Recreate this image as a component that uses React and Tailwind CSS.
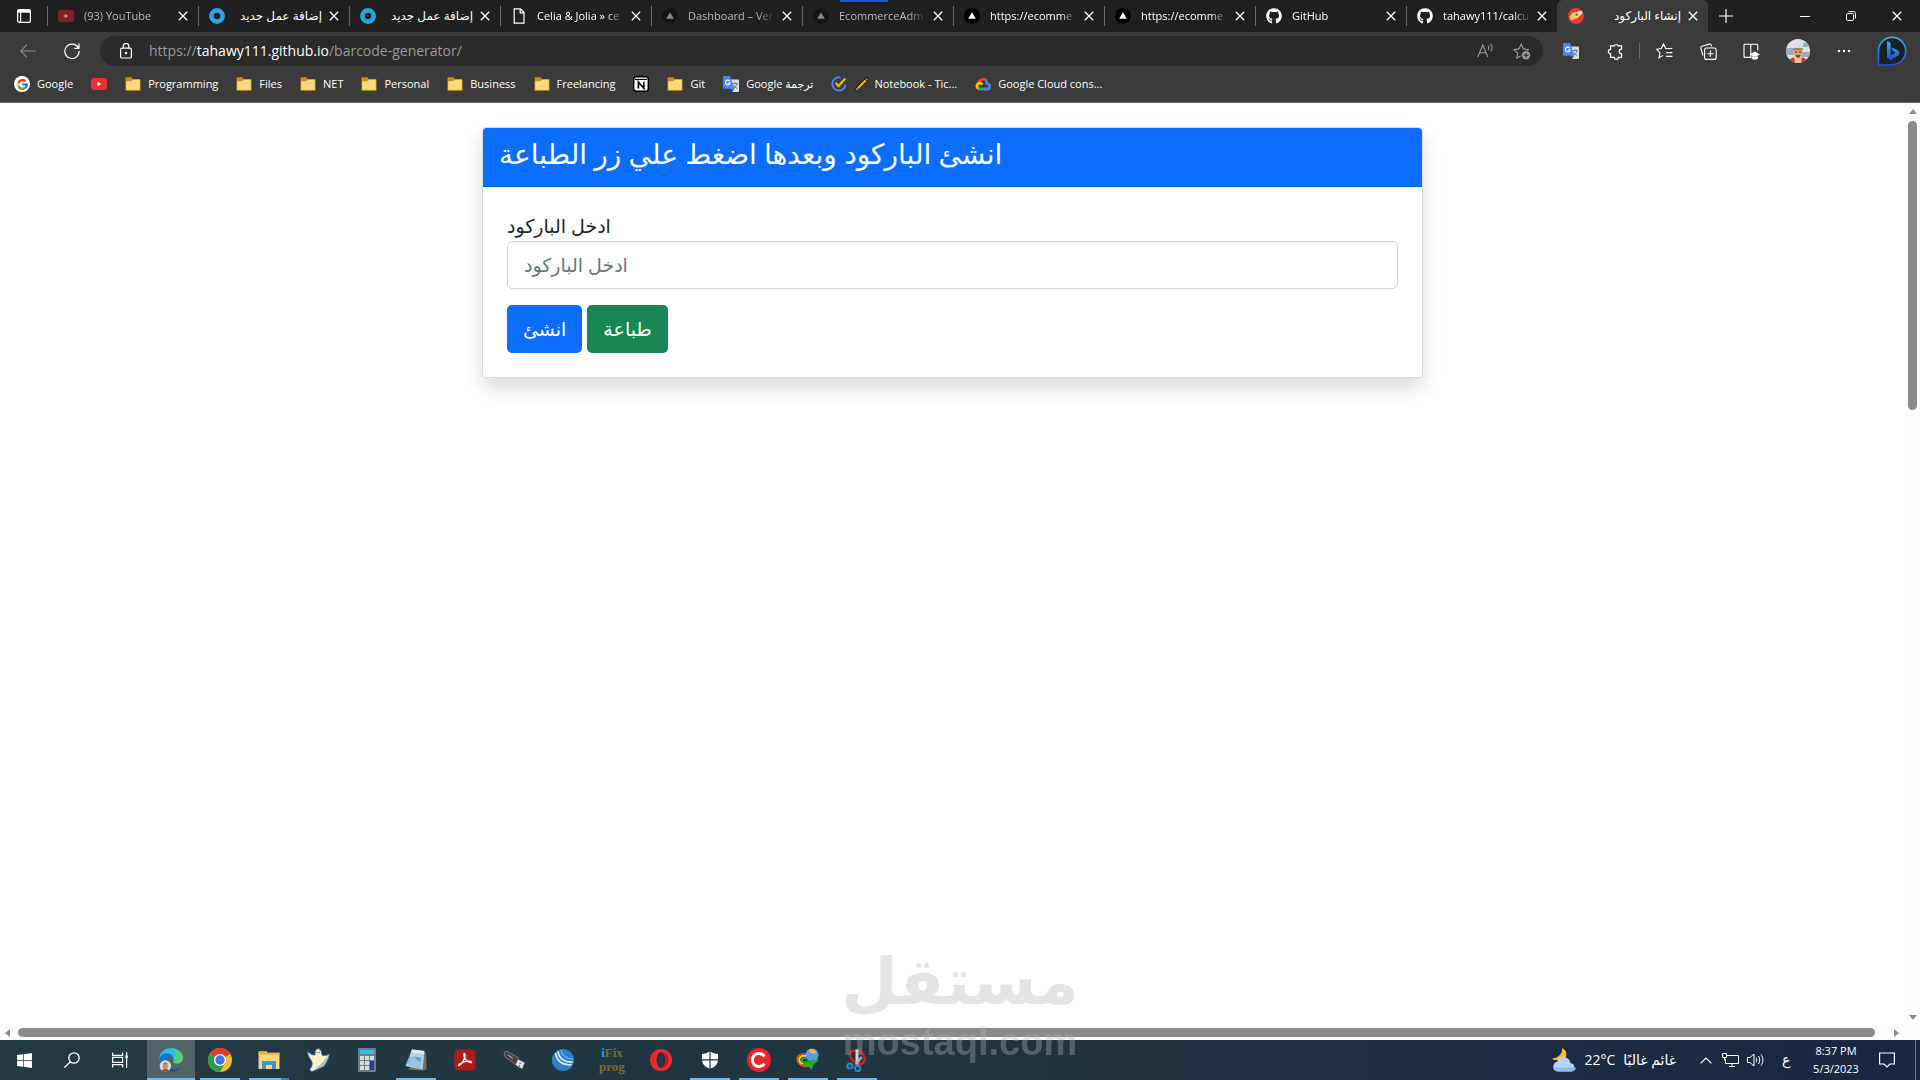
import { useState } from 'react'
import { FaGithub, FaWindows } from 'react-icons/fa'
import { FcGoogle } from 'react-icons/fc'

/* ---------- small shared icons ---------- */

function Close({ size = 10 }) {
  return (
    <svg width={size} height={size} viewBox="0 0 10 10" stroke="currentColor" strokeWidth="1.3">
      <path d="M.8.8l8.4 8.4M9.2.8L.8 9.2" />
    </svg>
  )
}

function Youtube({ dim }) {
  return (
    <svg width="16" height="16" viewBox="0 0 16 16">
      <rect y="2" width="16" height="12" rx="3" fill={dim ? '#842024' : '#f03030'} />
      <path d="M6.5 5.7v4.6L10.3 8z" fill={dim ? '#a99' : '#fff'} />
    </svg>
  )
}

function Ring() {
  return (
    <svg width="16" height="16" viewBox="0 0 16 16">
      <circle cx="8" cy="8" r="5.6" fill="none" stroke="#2ea3e6" strokeWidth="4.6" />
    </svg>
  )
}

function Page() {
  return (
    <svg width="16" height="16" viewBox="0 0 16 16" fill="none" stroke="#fff" strokeWidth="1.2">
      <path d="M3.2.8h6.2L13 4.6v10.6H3.2zM9.2.8v4H13" />
    </svg>
  )
}

function Vercel({ dim }) {
  return (
    <svg width="16" height="16" viewBox="0 0 16 16">
      <circle cx="8" cy="8" r="8" fill={dim ? '#151515' : '#000'} />
      <path d="M8 4.2l3.8 6.6H4.2z" fill={dim ? '#888' : '#fff'} />
    </svg>
  )
}

function Rocket() {
  return (
    <svg width="16" height="16" viewBox="0 0 16 16">
      <circle cx="8" cy="8" r="8" fill="#e8392c" />
      <path d="M1.5 8.5l3-4 4-.5-1 5-3 3.5-2-.5z" fill="#f5bd4f" />
      <path d="M5.5 6L10 3l4 1-1 3-3.5 3-4 1.5z" fill="#f7d56a" />
      <path d="M9.5 3.8l4-1 1 2.6-3 1.6z" fill="#eef1f4" />
      <circle cx="8.6" cy="6.8" r="1.2" fill="#56697a" />
    </svg>
  )
}

function Folder() {
  return (
    <svg width="16" height="16" viewBox="0 0 16 16">
      <path d="M.5 2.2C.5 1.6.9 1.2 1.5 1.2h4.8l1.6 1.8h6.6c.6 0 1 .4 1 1v10H.5z" fill="#c98f12" />
      <path d="M1.2 5.2h5L8 3.8h6.8v10.5H1.2z" fill="#ffd97a" />
      <path d="M.5 13.8h15v.9H.5z" fill="#c98f12" />
    </svg>
  )
}

function Notion() {
  return (
    <svg width="16" height="16" viewBox="0 0 16 16">
      <rect x=".7" y=".7" width="14.6" height="14.6" rx="2.5" fill="#fff" stroke="#000" strokeWidth="1.4" />
      <path d="M2 3.4h12" stroke="#000" strokeWidth="1.2" />
      <path d="M5.4 12.4V6l5.4 6.2V5.8" fill="none" stroke="#000" strokeWidth="1.7" />
    </svg>
  )
}

function Translate() {
  return (
    <svg width="16" height="16" viewBox="0 0 16 16">
      <path d="M6 3.5h9c.6 0 1 .4 1 1V15c0 .6-.4 1-1 1H9.4z" fill="#d7dade" />
      <path d="M9.5 7.5h5.4M12 6.3v1.2M14 7.7c-.6 2.2-2 3.8-3.8 4.8M10.6 8.8c.8 1.8 2 2.8 3.5 3.6" fill="none" stroke="#6d7f8c" />
      <path d="M1 0h6l4.3 12.8H1c-.6 0-1-.4-1-1V1c0-.6.4-1 1-1z" fill="#4a86f0" />
      <path d="M6.6 5A2.3 2.3 0 1 0 7 7H4.9" fill="none" stroke="#fff" strokeWidth="1.1" />
      <path d="M8.5 12.8h2.8L9.4 16z" fill="#3367c9" />
    </svg>
  )
}

function Tick() {
  return (
    <svg width="16" height="16" viewBox="0 0 16 16" fill="none" strokeWidth="2">
      <path d="M9.6 1.6A6.6 6.6 0 1 0 14.5 8.6" stroke="#4b83f2" />
      <path d="M4.6 6.8l3 3.2 6.6-7.4" stroke="#f4b71e" strokeWidth="2.2" />
    </svg>
  )
}

function Pencil() {
  return (
    <svg width="16" height="16" viewBox="0 0 16 16">
      <path d="M.8 15.2l1.6-4.4L11.6 1.4c1.8-1 3.4.6 2.8 2.4L5 13.2z" fill="#111" />
      <path d="M3 11.6L11 3.4l1.6 1.6-8 8z" fill="#f5b52c" />
      <path d="M11.4 3l1-1 1.6 1.6-1 1z" fill="#f0736b" />
      <path d="M1.8 14.2l1-2.4 1.4 1.4z" fill="#f5d8ae" />
    </svg>
  )
}

function Cloud() {
  return (
    <svg width="16" height="16" viewBox="0 0 16 16" fill="none" strokeWidth="2.8">
      <path d="M3.8 6.2A4.6 4.6 0 0 1 11.4 4.6" stroke="#e94335" />
      <path d="M10.6 4.6c1.2 1 1.6 2 1.7 3.2a2.6 2.6 0 0 1-.3 5.2H9" stroke="#4285f4" />
      <path d="M9.2 13H4.6a2.8 2.8 0 0 1-1.6-.6" stroke="#34a853" />
      <path d="M3.4 12.4a2.8 2.8 0 0 1 .8-5.2 2.8 2.8 0 0 1 3 1.4" stroke="#fbbc05" />
    </svg>
  )
}

/* ---------- browser chrome ---------- */

const tabs = [
  { icon: <Youtube dim />, title: '(93) YouTube', dim: true },
  { icon: <Ring />, title: 'إضافة عمل جديد', rtl: true },
  { icon: <Ring />, title: 'إضافة عمل جديد', rtl: true },
  { icon: <Page />, title: 'Celia & Jolia » ce' },
  { icon: <Vercel dim />, title: 'Dashboard – Ver', dim: true },
  { icon: <Vercel dim />, title: 'EcommerceAdm', dim: true, loading: true },
  { icon: <Vercel />, title: 'https://ecomme' },
  { icon: <Vercel />, title: 'https://ecomme' },
  { icon: <FaGithub size={16} />, title: 'GitHub' },
  { icon: <FaGithub size={16} />, title: 'tahawy111/calcu' },
  { icon: <Rocket />, title: 'إنشاء الباركود', rtl: true, active: true },
]

const bookmarks = [
  {
    icon: (
      <span className="grid size-4 place-items-center rounded-full bg-white">
        <FcGoogle size={13} />
      </span>
    ),
    label: 'Google',
  },
  { icon: <Youtube />, name: 'YouTube' },
  { icon: <Folder />, label: 'Programming' },
  { icon: <Folder />, label: 'Files' },
  { icon: <Folder />, label: 'NET' },
  { icon: <Folder />, label: 'Personal' },
  { icon: <Folder />, label: 'Business' },
  { icon: <Folder />, label: 'Freelancing' },
  { icon: <Notion />, name: 'Notion' },
  { icon: <Folder />, label: 'Git' },
  { icon: <Translate />, label: 'Google ترجمة' },
  { icon: <Tick />, extra: <Pencil />, label: 'Notebook - Tic...' },
  { icon: <Cloud />, label: 'Google Cloud cons...' },
]

function Tab({ tab }) {
  return (
    <div
      className={`relative flex h-8 w-[151px] min-w-0 items-center pl-[11px] pr-[7px] ${
        tab.active ? 'rounded-t-md bg-[#3b3b3b]' : ''
      }`}
    >
      {tab.loading && <span className="absolute left-[38px] top-0 h-0.5 w-12 bg-[#0b5fd7]" />}
      <span className="shrink-0">{tab.icon}</span>
      <a
        href="#"
        dir={tab.rtl ? 'rtl' : 'ltr'}
        className={`ml-2.5 mr-1 min-w-0 flex-1 overflow-hidden whitespace-nowrap leading-5 ${
          tab.dim ? 'text-[#b9b9b9]' : 'text-white'
        } ${
          tab.rtl
            ? 'text-xs'
            : 'text-[11px] [mask-image:linear-gradient(to_right,#000_80%,transparent)]'
        }`}
      >
        {tab.title}
      </a>
      <button type="button" aria-label="Close tab" className="grid size-4 shrink-0 place-items-center text-white">
        <Close />
      </button>
    </div>
  )
}

function TabBar() {
  return (
    <div className="flex h-8 items-center bg-[#202020] text-white">
      <button type="button" aria-label="Tab actions" className="grid h-8 w-[47px] shrink-0 place-items-center">
        <svg width="16" height="16" viewBox="0 0 16 16" fill="none" stroke="#fff" strokeWidth="1.2">
          <rect x="1.6" y="1.6" width="12.8" height="12.8" rx="2" />
          <path d="M1.6 3.2h12.8" strokeWidth="3" />
          <path d="M4.6 4v10.4" />
        </svg>
      </button>
      {tabs.map((tab, i) => (
        <div key={i} className="relative flex min-w-0">
          {!tab.active && <span className="absolute left-0 top-1.5 h-5 w-px bg-[#6a6a6a]" />}
          <Tab tab={tab} />
        </div>
      ))}
      <button type="button" aria-label="New tab" className="grid h-8 w-9 shrink-0 place-items-center">
        <svg width="14" height="14" viewBox="0 0 14 14" stroke="#fff" strokeWidth="1.2">
          <path d="M7 0v14M0 7h14" />
        </svg>
      </button>
      <div className="ml-auto flex shrink-0">
        <button type="button" aria-label="Minimize" className="grid h-8 w-[46px] place-items-center">
          <svg width="10" height="10" viewBox="0 0 10 10" stroke="#fff">
            <path d="M0 5.5h10" />
          </svg>
        </button>
        <button type="button" aria-label="Restore" className="grid h-8 w-[46px] place-items-center">
          <svg width="10" height="10" viewBox="0 0 10 10" fill="none" stroke="#fff">
            <rect x=".5" y="2.5" width="7" height="7" rx="1.2" />
            <path d="M2.5.5h5a2 2 0 0 1 2 2v5" />
          </svg>
        </button>
        <button type="button" aria-label="Close window" className="grid h-8 w-[46px] place-items-center">
          <Close />
        </button>
      </div>
    </div>
  )
}

function ToolButton({ label, children, className = 'w-11' }) {
  return (
    <button type="button" aria-label={label} className={`grid h-8 shrink-0 place-items-center ${className}`}>
      {children}
    </button>
  )
}

function AddressBar() {
  return (
    <div className="flex h-[38px] items-center bg-[#3b3b3b] pl-1.5 pr-1.5 text-white">
      <ToolButton label="Back">
        <svg width="16" height="14" viewBox="0 0 16 14" fill="none" stroke="#8a8a8a" strokeWidth="1.1">
          <path d="M16 7H.8M7 .6L.8 7 7 13.4" />
        </svg>
      </ToolButton>
      <ToolButton label="Refresh">
        <svg width="16" height="16" viewBox="0 0 16 16" fill="none" stroke="#fff" strokeWidth="1.2">
          <path d="M14.6 5.4A7.2 7.2 0 1 0 15.2 8M15 .6v4.8h-4.8" />
        </svg>
      </ToolButton>
      <div className="ml-1.5 flex h-[30px] min-w-0 flex-1 items-center rounded-full bg-[#2b2b2b] pl-5 pr-3">
        <svg width="12" height="16" viewBox="0 0 12 16" className="shrink-0" fill="none" stroke="#fff" strokeWidth="1.2">
          <rect x=".6" y="5.2" width="10.8" height="9.8" rx="1.6" />
          <path d="M3.2 5V3.2a2.8 2.8 0 0 1 5.6 0V5" />
          <circle cx="6" cy="10" r=".6" fill="#fff" />
        </svg>
        <a href="https://tahawy111.github.io/barcode-generator/" className="ml-[17px] truncate text-sm text-[#999]">
          https://<span className="text-white">tahawy111.github.io</span>/barcode-generator/
        </a>
        <div className="ml-auto flex shrink-0 items-center gap-[18px]">
          <svg width="18" height="16" viewBox="0 0 18 16" fill="none" stroke="#9a9a9a" strokeWidth="1.1">
            <path d="M.8 14L5.8 2l5 12M2.6 9.8H9M11 2.6c1.2 1.2 1.2 3 .2 4.4M13.4.8c2 2 2 5.2.4 7.4" />
          </svg>
          <svg width="18" height="18" viewBox="0 0 18 18" fill="none" stroke="#9a9a9a" strokeWidth="1.1">
            <path d="M7.6 14l-3.8 2 .8-4.8L1 7.6l4.9-.7L8.2 2l2.2 4.9 5 .7-1.2 1.2" />
            <circle cx="13" cy="13.2" r="4.2" fill="#9a9a9a" stroke="none" />
            <path d="M13 10.8v4.8M10.6 13.2h4.8" stroke="#2b2b2b" />
          </svg>
        </div>
      </div>
      <div className="ml-2 flex shrink-0 items-center">
        <ToolButton label="Translate" className="w-10">
          <Translate />
        </ToolButton>
        <ToolButton label="Extensions" className="w-12">
          <svg width="17" height="17" viewBox="0 0 17 17" fill="none" stroke="#fff" strokeWidth="1.2">
            <path d="M7.4 2.8a1.9 1.9 0 0 1 3.6 0h3.6v3.4a2 2 0 0 0 0 4.6v3.6h-3.4a2 2 0 0 1-4 0H3.6v-3.6a2.2 2.2 0 1 1 0-4.4V2.8z" />
          </svg>
        </ToolButton>
        <span className="h-4 w-px bg-[#666]" />
        <ToolButton label="Favorites" className="w-12">
          <svg width="17" height="16" viewBox="0 0 17 16" fill="none" stroke="#fff" strokeWidth="1.1">
            <path d="M7 12.4l-4 2.4.9-5L.6 6.2l4.7-.7L7.5.9l2.2 4.6h6.6M10 9.6h6.4M10 13.4h6.4" />
          </svg>
        </ToolButton>
        <ToolButton label="Collections" className="w-10">
          <svg width="17" height="17" viewBox="0 0 17 17" fill="none" stroke="#fff" strokeWidth="1.1">
            <rect x="4.6" y="5" width="11.6" height="11.4" rx="2" />
            <path d="M10.4 7.6v6.2M7.3 10.7h6.2M3 12.6L.9 5.4c-.3-1 .2-1.9 1.2-2.2l7-2.1c1-.3 2 .2 2.3 1.2l.3 1" />
          </svg>
        </ToolButton>
        <ToolButton label="Browser essentials" className="w-[46px]">
          <svg width="17" height="17" viewBox="0 0 17 17" fill="none" stroke="#fff" strokeWidth="1.1">
            <path d="M7.8 14.4H2c-.6 0-1-.4-1-1V2.2c0-.6.4-1 1-1h4.8c.6 0 1 .4 1 1zM7.8 2.2c0-.6.4-1 1-1h5c.6 0 1 .4 1 1v5.4" />
            <path d="M11.8 8.6l5.2 2.8-5.2 2.6-5.2-2.6zM8.6 13.4v2c1.8 1.6 4.6 1.6 6.4 0v-2z" fill="#fff" stroke="none" />
          </svg>
        </ToolButton>
        <ToolButton label="Profile" className="w-12">
          <svg width="24" height="24" viewBox="0 0 24 24">
            <clipPath id="avatar">
              <circle cx="12" cy="12" r="12" />
            </clipPath>
            <g clipPath="url(#avatar)">
              <path d="M0 0h24v24H0z" fill="#dde3e4" />
              <path d="M0 9h7v7H0zM17 4h7v4h-7zM16 13h8v5h-8z" fill="#8fb0c4" />
              <path d="M2 24c1-4 4-6 10-6s9 2 10 6z" fill="#c23a2c" />
              <path d="M8 18h8l-1 6H9z" fill="#e9c9a4" />
              <ellipse cx="12" cy="12.6" rx="4.8" ry="6.6" fill="#e0a36c" />
              <path d="M7.4 8.4c0-5 9.2-5 9.2 0v1.4H7.4z" fill="#d9dcd8" />
              <path d="M7 9.4h10v1.2H7z" fill="#6a4a38" />
              <path d="M9 13h2.2M13 13h2.2" stroke="#4a2a20" strokeWidth="1.2" />
              <path d="M9.6 16h5l-1.2 2.6h-2.6z" fill="#7a3d2a" />
            </g>
          </svg>
        </ToolButton>
        <ToolButton label="Settings and more">
          <svg width="14" height="4" viewBox="0 0 14 4" fill="#fff">
            <circle cx="2" cy="2" r="1.2" />
            <circle cx="7" cy="2" r="1.2" />
            <circle cx="12" cy="2" r="1.2" />
          </svg>
        </ToolButton>
        <ToolButton label="Bing" className="ml-1 w-11">
          <svg width="30" height="32" viewBox="0 0 30 32">
            <linearGradient id="bing" x1="0" y1="0" x2="0" y2="1">
              <stop offset="0" stopColor="#2fb4f3" />
              <stop offset="1" stopColor="#1c50e0" />
            </linearGradient>
            <path
              d="M1.5 30.2V15.4A13.6 13.6 0 1 1 15 29.6c-2.6 0-4 .6-13.5.6z"
              fill="#1d1f24"
              stroke="url(#bing)"
              strokeWidth="1.6"
            />
            <path d="M10 6l3.6 1.8v12.6l5-2.8-2.8-1.4-1.6-4 7 3.2c1.8 1 1.8 3.8 0 5L13.6 25 10 22.6z" fill="url(#bing)" />
          </svg>
        </ToolButton>
      </div>
    </div>
  )
}

function Bookmarks() {
  return (
    <nav className="flex h-[33px] items-center gap-[18px] border-b border-[#666] bg-[#3b3b3b] pb-1 pl-3.5 text-[11px] text-white">
      {bookmarks.map((b, i) => (
        <a key={i} href="#" aria-label={b.name} className="flex items-center gap-[7px] whitespace-nowrap">
          {b.icon}
          {b.extra ? (
            <span className="flex items-center gap-1">
              {b.extra}
              {b.label}
            </span>
          ) : (
            b.label
          )}
        </a>
      ))}
    </nav>
  )
}

/* ---------- page ---------- */

function BarcodeCard() {
  const [code, setCode] = useState('')

  return (
    <section className="mx-auto w-full max-w-[941px] overflow-hidden rounded-[5px] border border-black/15 bg-white shadow-[0_10px_20px_rgba(0,0,0,0.15)]">
      <header className="border-b border-black/15 bg-[#0d6efd] px-4 pb-4 pt-2">
        <h1 className="text-[28px] font-medium leading-[34px] text-white">انشئ الباركود وبعدها اضغط علي زر الطباعة</h1>
      </header>
      <form className="p-6" onSubmit={(e) => e.preventDefault()}>
        <label htmlFor="barcode" className="block text-[19px] leading-[30px] text-[#212529]">
          ادخل الباركود
        </label>
        <input
          id="barcode"
          value={code}
          onChange={(e) => setCode(e.target.value)}
          placeholder="ادخل الباركود"
          className="block h-12 w-full rounded-[5px] border border-[#ced4da] px-4 text-[19px] text-[#212529] placeholder:text-[#6c757d]"
        />
        <div className="mt-4 flex gap-[5px]">
          <button type="submit" className="h-12 rounded-[5px] bg-[#0d6efd] px-4 text-[19px] text-white">
            انشئ
          </button>
          <button type="button" className="h-12 rounded-[5px] bg-[#198754] px-4 text-[19px] text-white">
            طباعة
          </button>
        </div>
      </form>
    </section>
  )
}

function Arrow({ d, className = '' }) {
  return (
    <svg width="8" height="8" viewBox="0 0 8 8" fill="#8a8a8a" className={className}>
      <path d={d} />
    </svg>
  )
}

function Viewport() {
  return (
    <div className="flex flex-1 flex-col bg-white">
      <div className="flex flex-1">
        <main className="flex-1 px-6 pt-6">
          <BarcodeCard />
        </main>
        <div className="flex w-[15px] flex-col items-center bg-[#fcfcfc] pb-1 pt-1">
          <Arrow d="M4 2l4 5H0z" />
          <div className="mt-1.5 h-[289px] w-[9px] rounded-full bg-[#8a8a8a]" />
          <Arrow d="M4 7L0 2h8z" className="mt-auto" />
        </div>
      </div>
      <div className="flex h-[15px] items-center bg-[#fcfcfc] pl-1 pr-[19px]">
        <Arrow d="M1 4l5-4v8z" />
        <div className="ml-1.5 h-[9px] flex-1 rounded-full bg-[#8a8a8a]" />
        <Arrow d="M6 4L1 8V0z" className="ml-[18px]" />
      </div>
    </div>
  )
}

/* ---------- taskbar ---------- */

const apps = [
  {
    name: 'Edge',
    active: true,
    icon: (
      <svg width="24" height="24" viewBox="0 0 24 24">
        <path d="M0 11C.6 4.6 5.4 0 12 0c7 0 12 4.6 12 9.6 0 4-3 6-6 6-2.6 0-4-1-3.6-2 1-1.8-.2-5.6-4.6-5.6C4.6 8 0 12 0 11z" fill="#35b6e6" />
        <path d="M14 1c6 .6 10 4.4 10 8.6 0 4-3 6-6 6-2.6 0-4-1-3.6-2C17 9 17 4 14 1z" fill="#54d06c" />
        <path d="M0 11c1-4 5-6 9-5.4 3.6.4 6 3 5.8 5.4-1-2-4-3-6-1.4-3 2.4-1.8 10 6.2 12C6 26 0 19 0 11z" fill="#1375c9" />
        <path d="M8 11c-2 5 2 10.4 8 10.4 3 0 5-1.6 6.4-3.4C20 22.4 16 24 13 24 7 23 4 16 8 11z" fill="#1d4f9e" />
        <circle cx="6.4" cy="18" r="5.8" fill="#ded8d2" />
        <ellipse cx="6.4" cy="18.4" rx="2.4" ry="3.4" fill="#c9895c" />
        <path d="M4 16.2c.4-2.4 4.4-2.4 4.8 0z" fill="#8b7a70" />
        <path d="M3 22.4c1.6-1.4 5.2-1.4 6.8 0-2 1.8-4.8 1.8-6.8 0z" fill="#a23a2a" />
      </svg>
    ),
  },
  {
    name: 'Chrome',
    open: true,
    icon: (
      <svg width="24" height="24" viewBox="0 0 24 24">
        <circle cx="12" cy="12" r="12" fill="#f3bd2b" />
        <path d="M12 12L1.6 6A12 12 0 0 1 22.4 6z" fill="#e13a2e" />
        <path d="M1.6 6A12 12 0 0 0 12 24l5.2-9L12 12z" fill="#2e9d4b" />
        <circle cx="12" cy="12" r="6" fill="#fff" />
        <circle cx="12" cy="12" r="4.7" fill="#3b78e7" />
      </svg>
    ),
  },
  {
    name: 'File Explorer',
    stacked: true,
    icon: (
      <svg width="24" height="24" viewBox="0 0 24 24">
        <path d="M1.5 3h8l1.6 2.4H1.5z" fill="#d9a02a" />
        <path d="M1.5 4.8h21V21h-21z" fill="#fbd77c" />
        <path d="M1.5 4.8h21v2h-21z" fill="#eab94a" />
        <path d="M5 13h14v8h-4v-4H9v4H5z" fill="#3d93d2" />
      </svg>
    ),
  },
  {
    name: 'Ghost',
    icon: (
      <svg width="24" height="24" viewBox="0 0 24 24">
        <path
          d="M9 4.6c0-5.2 6-5.2 6.6 0l.4 2.6c2.4.4 5 .2 7.4-1-1 5-3 9-6 12.4L6 23.6c-2-1-3-1.6-1.6-3.4 1.6-2 2.2-3.4 1.6-6C5 11 1.6 9 1.6 3.6 4 5.6 6.6 7.4 9 7z"
          fill="#fbf3c9"
          stroke="#2f6bc0"
          strokeWidth=".9"
        />
        <path d="M22 8c-1 4-3 8-5 10.2L7 23l8-7c2-2 4-5 7-8z" fill="#bdb9a4" />
        <circle cx="11" cy="4.4" r=".7" fill="#555" />
        <circle cx="13.4" cy="4.4" r=".7" fill="#555" />
      </svg>
    ),
  },
  {
    name: 'Calculator',
    icon: (
      <svg width="24" height="24" viewBox="0 0 24 24">
        <rect x="3" width="18" height="24" rx="1" fill="#6e7c86" />
        <path d="M5 2h14v4H5z" fill="#35bdf0" />
        <path d="M5 8h4v4H5zM10 8h4v4h-4zM15 8h4v4h-4zM5 13h4v4H5zM10 13h4v4h-4zM5 18h4v4H5zM10 18h4v4h-4z" fill="#d9dee2" />
        <path d="M15 13h4v9h-4z" fill="#233f9b" />
      </svg>
    ),
  },
  {
    name: 'Notepad',
    open: true,
    icon: (
      <svg width="24" height="24" viewBox="0 0 24 24">
        <path d="M19 4l3 1 .6 16-3 1.6L4 21.6z" fill="#7c6f60" />
        <path d="M8 1.6L20.4 3l-1.8 18.4L1.4 18z" fill="#a9d4ea" />
        <path d="M8 1.6L20.4 3l-.3 3L6.8 4.6z" fill="#e4eef3" />
        <path d="M5.6 8L17 9.6 16 20 2.8 16.6z" fill="#5b9fc6" />
        <path d="M7 6l9 8 1 6-14-3z" fill="#cde8f4" opacity=".5" />
      </svg>
    ),
  },
  {
    name: 'Acrobat',
    icon: (
      <svg width="24" height="24" viewBox="0 0 24 24">
        <rect x="1.5" y="1.5" width="21" height="21" rx="4" fill="#b01c15" />
        <path
          d="M6 17.6c2-.4 5-5 6-8.6.8-3-.8-4.4-1.2-2.8-.6 3 3 7.4 6.4 8.4 1.6.4 2-.8.2-1.2C14 12.8 9.6 14.2 6.6 16c-1.6 1-1.4 1.8-.6 1.6z"
          fill="none"
          stroke="#fff"
          strokeWidth="1.3"
        />
      </svg>
    ),
  },
  {
    name: 'USB',
    icon: (
      <svg width="24" height="24" viewBox="0 0 24 24">
        <path d="M2 4.6L5 3l11.6 6.8-2.6 7L3 9z" fill="#454545" stroke="#8a8a8a" strokeWidth=".7" />
        <path d="M16 11.4l6.6 3.4-2.4 6-6.6-3.8z" fill="#e9e9e9" stroke="#888" strokeWidth=".6" />
        <path d="M6 7l5 3.4" stroke="#b8c8b8" />
        <path d="M17.6 15l1 .6M17 17.6l1 .6" stroke="#333" strokeWidth="1.2" />
      </svg>
    ),
  },
  {
    name: 'Globe',
    icon: (
      <svg width="24" height="24" viewBox="0 0 24 24" fill="none">
        <circle cx="12" cy="12" r="11" fill="#2f7fd0" />
        <path d="M4.6 5c1 7 6 13 16 11.6M7 3.4c.6 6 6 11.4 14.6 10.6" stroke="#e6f2fc" strokeWidth="1.6" />
        <path d="M10 2c1 5 5 9 12 9" stroke="#7fb6ea" strokeWidth="1.2" />
      </svg>
    ),
  },
  {
    name: 'iFix prog',
    icon: (
      <span className="flex flex-col text-center font-['Liberation_Serif',serif] text-[13px] font-bold leading-[14px] text-[#7a6a32]">
        <span>
          <span className="text-[#2c9be0]">i</span>Fix
        </span>
        <span>prog</span>
      </span>
    ),
  },
  {
    name: 'Opera',
    icon: (
      <svg width="24" height="24" viewBox="0 0 24 24">
        <path
          d="M12 1a11 11 0 1 0 0 22 11 11 0 0 0 0-22zm0 3.2c2.6 0 4.4 3.4 4.4 7.8s-1.8 7.8-4.4 7.8-4.4-3.4-4.4-7.8S9.4 4.2 12 4.2z"
          fill="#ee2a30"
          fillRule="evenodd"
        />
        <path d="M12 4.2c2.6 0 4.4 3.4 4.4 7.8s-1.8 7.8-4.4 7.8c4 1 7.4-3 7.4-7.8S16 3.200 12 4.200z" fill="#bb171d" />
      </svg>
    ),
  },
  {
    name: 'Security',
    open: true,
    icon: (
      <svg width="24" height="24" viewBox="0 0 24 24" fill="#fff">
        <path d="M11.4 3.6v7.6H4V6c3 0 5.4-.8 7.4-2.4zM12.6 3.6v7.6H20V6c-3 0-5.4-.8-7.4-2.4zM11.4 12.4v8.2C7 18.8 4.4 16.2 4 12.4zM12.6 12.4v8.2c4.4-1.8 7-4.4 7.4-8.2z" />
      </svg>
    ),
  },
  {
    name: 'Cent',
    open: true,
    icon: (
      <svg width="24" height="24" viewBox="0 0 24 24">
        <circle cx="12" cy="12" r="12" fill="#e9252b" />
        <path d="M17.4 8.4a6.6 6.6 0 1 0 0 7.2" fill="none" stroke="#fff" strokeWidth="3" />
      </svg>
    ),
  },
  {
    name: 'Download Manager',
    open: true,
    icon: (
      <svg width="24" height="24" viewBox="0 0 24 24">
        <circle cx="16" cy="7" r="6.6" fill="#5b9be0" />
        <path d="M13 1.6c2-1.4 5-.6 6.4 1.4s-1 3-3 2.6-4-2.6-3.4-4z" fill="#f3b552" />
        <path d="M10 6C3.6 5 .4 8.600 1.4 12.6S7 19.600 13 18" fill="none" stroke="#e9532c" strokeWidth="1.6" />
        <path d="M10 8C5 7 2.6 9.6 3.4 12.6s4 4.4 9 3.4" fill="none" stroke="#f4d224" strokeWidth="2" />
        <path d="M10 10c-3-.4-4.6 1-4 2.8s3 2.6 6 1.8" fill="none" stroke="#3bb54a" strokeWidth="1.6" />
        <path d="M9 13l14.6-1.4-6 5-2 5.400-3-3.400-7-1z" fill="#1fae1f" />
      </svg>
    ),
  },
  {
    name: 'Snipping Tool',
    open: true,
    icon: (
      <svg width="24" height="24" viewBox="0 0 24 24" fill="none">
        <path d="M5 4.6C9 1 17 2 19 7.6S18 17 14 16C9 15.6 4 9 5 4.6z" stroke="#c92020" strokeWidth="2.6" />
        <path d="M10.5 1.6h3v15h-3z" fill="#d5d8da" />
        <path d="M10.5 14l5.6-6 1.4 2-5.2 6.6z" fill="#a9aeb2" />
        <circle cx="5" cy="18" r="2.6" stroke="#2a86d8" strokeWidth="2" />
        <circle cx="12.6" cy="20.4" r="2.6" stroke="#2a86d8" strokeWidth="2" />
      </svg>
    ),
  },
]

function Taskbar() {
  return (
    <footer className="flex h-10 items-stretch bg-linear-to-r from-[#223a42] via-[#1f3542] to-[#1b2642] text-white">
      <button type="button" aria-label="Start" className="grid w-12 place-items-center">
        <FaWindows size={17} />
      </button>
      <button type="button" aria-label="Search" className="grid w-12 place-items-center">
        <svg width="16" height="16" viewBox="0 0 16 16" fill="none" stroke="#fff" strokeWidth="1.3">
          <circle cx="10" cy="6" r="5.2" />
          <path d="M6.4 9.8L.4 15.6" />
        </svg>
      </button>
      <button type="button" aria-label="Task View" className="mr-[3px] grid w-12 place-items-center">
        <svg width="16" height="16" viewBox="0 0 16 16" fill="none" stroke="#fff" strokeWidth="1.2">
          <path d="M.6.4v3h10v-3M.6 15.6v-3h10v3M.6 5.4h10v5H.6zM14.6 0v16" />
          <path d="M13.4 3.4h2.4v2.8h-2.4z" fill="#fff" stroke="none" />
        </svg>
      </button>
      <div className="flex gap-px">
        {apps.map((app) => (
          <button
            key={app.name}
            type="button"
            aria-label={app.name}
            className={`relative grid w-12 place-items-center ${app.active ? 'bg-[#506469]' : ''}`}
          >
            {app.icon}
            {app.active && <span className="absolute inset-x-0 bottom-0 h-0.5 bg-[#76b9ed]" />}
            {app.open && <span className="absolute inset-x-1 bottom-0 h-0.5 bg-[#76b9ed]" />}
            {app.stacked && (
              <span className="absolute inset-x-1 bottom-0 flex h-0.5 bg-[#76b9ed]">
                <span className="ml-auto w-2 bg-[#4383ae]" />
              </span>
            )}
          </button>
        ))}
      </div>

      <div className="ml-auto flex items-center text-sm">
        <button type="button" className="flex items-center gap-2">
          <svg width="24" height="24" viewBox="0 0 24 24">
            <path d="M10 0c5 2 6 8 1.6 12H1.6c-.6-.6-1-1.4-1-2C5 11 11 6 10 0z" fill="#f5bd38" />
            <path d="M6 23.5a5 5 0 0 1-1-9.8 7 7 0 0 1 13.4 1.2 4.4 4.4 0 0 1 .6 8.6z" fill="#b5d3f6" />
            <path d="M1 19.5c1 3 3 4 5 4h13c3 0 5-2 5-4z" fill="#8db9ee" />
          </svg>
          <span>22°C</span>
          <span dir="rtl">غائم غالبًا</span>
        </button>
        <button type="button" aria-label="Show hidden icons" className="ml-6">
          <svg width="12" height="7" viewBox="0 0 12 7" fill="none" stroke="#fff" strokeWidth="1.2">
            <path d="M.6 6.4L6 1l5.4 5.4" />
          </svg>
        </button>
        <button type="button" aria-label="Network" className="ml-2.5">
          <svg width="17" height="15" viewBox="0 0 17 15" fill="none" stroke="#fff">
            <path d="M5 2.5h11.5v8H3.5V6M7 13.5h6M10 10.5v3" />
            <path d="M.5.5h4v4h-4z" fill="#223" />
            <path d="M2.5 4.5v3" />
          </svg>
        </button>
        <button type="button" aria-label="Volume" className="ml-2">
          <svg width="17" height="14" viewBox="0 0 17 14" fill="none" stroke="#fff">
            <path d="M.5 4.5H3L7 1v12L3 9.5H.5zM9 4.600c1 1.4 1 3.4 0 4.8M11.4 3c1.8 2.2 1.8 5.8 0 8M13.8 1.4c2.8 3.2 2.8 8 0 11.2" />
          </svg>
        </button>
        <span className="ml-[18px] w-[19px]">ع</span>
        <div className="flex w-[70px] flex-col text-center text-[11px] leading-[18px]">
          <time>8:37 PM</time>
          <time>5/3/2023</time>
        </div>
        <button type="button" aria-label="Notifications" className="ml-2 mr-5">
          <svg width="16" height="16" viewBox="0 0 16 16" fill="none" stroke="#fff" strokeWidth="1.2">
            <path d="M.6 1h14.8v11H11l-3 3-3-3H.6z" />
          </svg>
        </button>
        <span className="mr-1 h-full w-px bg-[#6b7488]" />
      </div>
    </footer>
  )
}

function Watermark() {
  return (
    <div className="pointer-events-none absolute bottom-4 left-1/2 flex -translate-x-1/2 flex-col items-center font-bold text-[#b4b4b4] opacity-35">
      <span className="font-['DejaVu_Sans',sans-serif] text-[65px] leading-[76px]">مستقل</span>
      <span className="font-['Liberation_Sans',sans-serif] text-[38px] leading-[44px]">mostaql.com</span>
    </div>
  )
}

export default function App() {
  return (
    <div className="relative flex min-h-screen flex-col overflow-hidden bg-white font-['Open_Sans','DejaVu_Sans',sans-serif]">
      <TabBar />
      <AddressBar />
      <Bookmarks />
      <Viewport />
      <Taskbar />
      <Watermark />
    </div>
  )
}
